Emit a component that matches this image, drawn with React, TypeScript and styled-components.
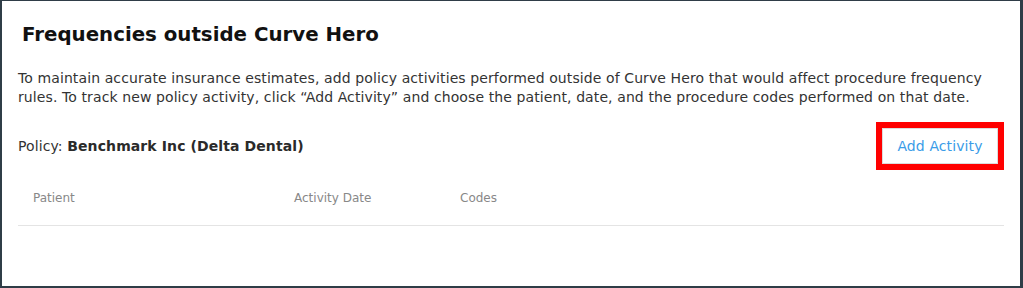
import React from 'react';
import styled, { createGlobalStyle } from 'styled-components';

const GlobalStyle = createGlobalStyle`
  html, body {
    margin: 0;
    padding: 0;
    background: #2f3d47;
  }
  body {
    font-family: 'DejaVu Sans', Verdana, sans-serif;
  }
`;

const Panel = styled.div`
  background: #ffffff;
  margin: 1px 3px 2px 2px;
  height: 285px;
  box-sizing: border-box;
  padding: 20px 16px 0 16px;
  display: flex;
  flex-direction: column;
`;

const Title = styled.h2`
  margin: 0 0 0 4px;
  font-size: 19.8px;
  font-weight: bold;
  color: #111;
  line-height: 28px;
`;

const Intro = styled.p`
  margin: 20px 0 0 0;
  font-size: 14px;
  letter-spacing: 0.1px;
  line-height: 19px;
  color: #333;
`;

const PolicyRow = styled.div`
  display: flex;
  align-items: center;
  justify-content: space-between;
  margin-top: 21px;
`;

const PolicyText = styled.div`
  font-size: 14px;
  letter-spacing: 0.1px;
  color: #333;

  strong {
    color: #2a2a2a;
  }
`;

const AddButton = styled.button`
  font-family: inherit;
  font-size: 14px;
  letter-spacing: 0.1px;
  color: #3a9ce8;
  background: #fff;
  border: 1px solid #dcdcdc;
  outline: 6px solid #ff0000;
  outline-offset: 0;
  padding: 0;
  width: 116px;
  height: 36px;
  margin-right: 6px;
  cursor: pointer;
`;

const HeaderRow = styled.div`
  display: grid;
  grid-template-columns: 261px 166px 1fr;
  padding: 0 0 0 15px;
  height: 47px;
  align-items: center;
  margin-top: 14px;
  border-bottom: 1px solid #e4e4e4;
`;

const HeaderCell = styled.div`
  font-size: 12px;
  color: #888;
  margin-top: -7px;
`;

export default function App() {
  return (
    <>
      <GlobalStyle />
      <Panel>
        <Title>Frequencies outside Curve Hero</Title>
        <Intro>
          To maintain accurate insurance estimates, add policy activities performed outside of Curve
          Hero that would affect procedure frequency rules. To track new policy activity, click
          “Add Activity” and choose the patient, date, and the procedure codes performed on that
          date.
        </Intro>
        <PolicyRow>
          <PolicyText>
            Policy: <strong>Benchmark Inc (Delta Dental)</strong>
          </PolicyText>
          <AddButton>Add Activity</AddButton>
        </PolicyRow>
        <HeaderRow>
          <HeaderCell>Patient</HeaderCell>
          <HeaderCell>Activity Date</HeaderCell>
          <HeaderCell>Codes</HeaderCell>
        </HeaderRow>
      </Panel>
    </>
  );
}
